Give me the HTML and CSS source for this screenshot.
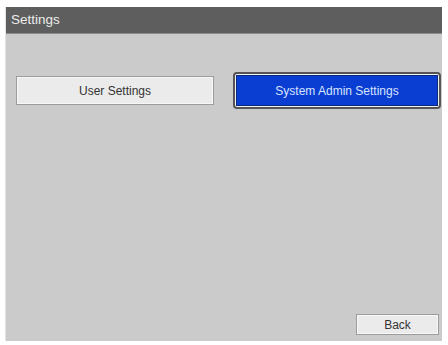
FILE: index.html
```html
<!DOCTYPE html>
<html>
<head>
<meta charset="utf-8">
<link rel="stylesheet" href="styles.css">
</head>
<body>
<div class="screen">
  <div class="titlebar">Settings</div>
  <div class="content">
    <div class="row">
      <button class="btn">User Settings</button>
      <div class="focus"><button class="btn primary">System Admin Settings</button></div>
    </div>
    <div class="footer">
      <button class="btn back">Back</button>
    </div>
  </div>
</div>
</body>
</html>
```
FILE: styles.css
```css
html, body {
  margin: 0;
  padding: 0;
  background: #ffffff;
}
body {
  width: 448px;
  height: 345px;
  font-family: "Liberation Sans", Arial, sans-serif;
}
.screen {
  margin: 7px 6px 4px 5px;
  height: 334px;
  display: flex;
  flex-direction: column;
  background: #cbcbcb;
  border-left: 1px solid #e2e2e2;
}
.titlebar {
  height: 26px;
  background: #5e5e5e;
  color: #ececec;
  font-size: 13.5px;
  line-height: 26px;
  padding-left: 5px;
  border-bottom: 1px solid #8a8a8a;
}
.content {
  flex: 1;
  display: flex;
  flex-direction: column;
  justify-content: space-between;
  padding: 38px 1px 6px 10px;
}
.row {
  display: flex;
  align-items: center;
  justify-content: space-between;
}
.btn {
  font-family: "Liberation Sans", Arial, sans-serif;
  font-size: 12px;
  color: #333;
  background: #ebebeb;
  border: 1px solid #9d9d9d;
  box-shadow: inset 0 0 0 1px #f7f7f7;
  width: 198px;
  height: 29px;
  padding: 0;
  margin: 0;
  cursor: default;
}
.focus {
  border: 2px solid #555;
  border-radius: 4px;
  padding: 1px;
  background: #f2f2f2;
  display: flex;
}
.primary {
  background: #0a3ed2;
  color: #d8e4ff;
  border: 1px solid #0a2a80;
  box-shadow: none;
  width: 202px;
  height: 31px;
}
.footer {
  display: flex;
  justify-content: flex-end;
  padding-right: 2px;
}
.back {
  width: 83px;
  height: 21px;
}
```
